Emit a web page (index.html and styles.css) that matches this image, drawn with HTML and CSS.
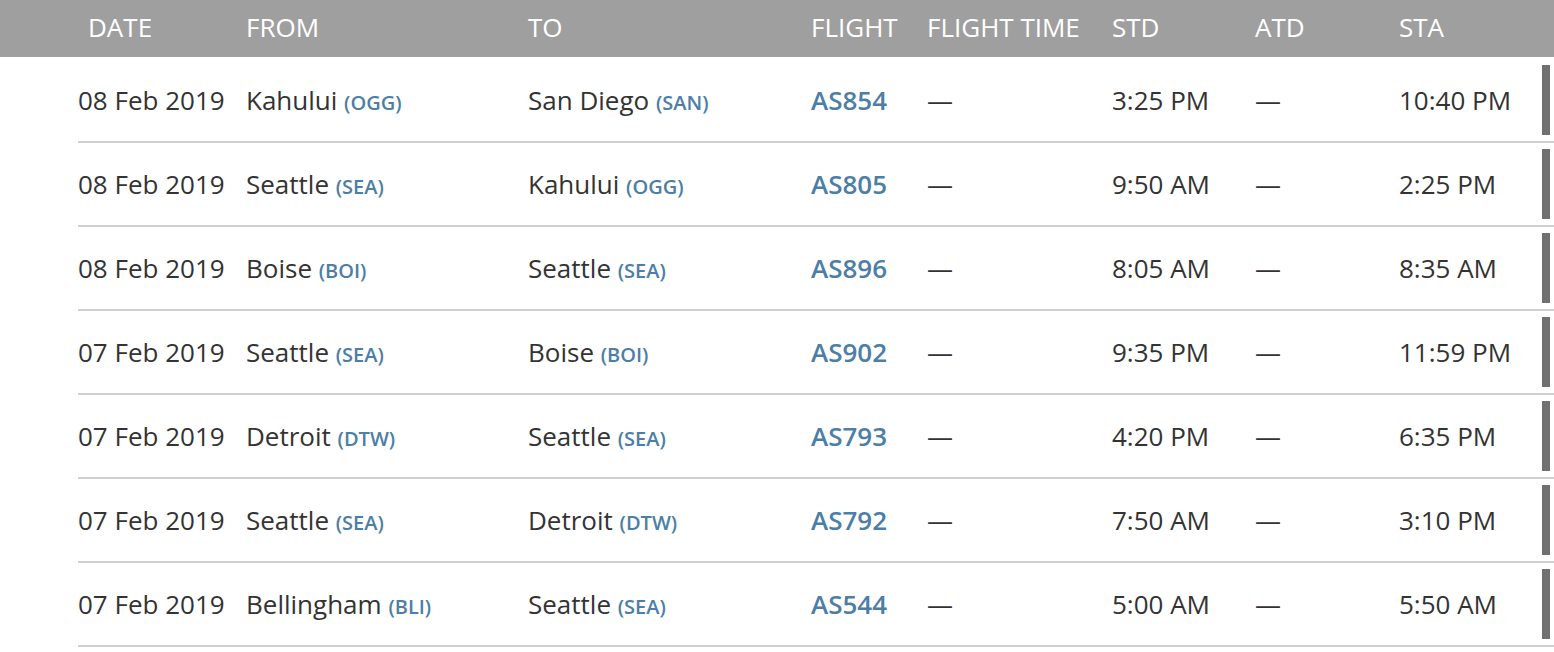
FILE: index.html
```html
<!DOCTYPE html>
<html lang="en">
<head>
<meta charset="utf-8">
<title>Flight history</title>
<link rel="stylesheet" href="styles.css">
</head>
<body>
<div class="flights">
  <div class="head">
    <div class="hcell hdate">DATE</div>
    <div class="hcell">FROM</div>
    <div class="hcell">TO</div>
    <div class="hcell hflight">FLIGHT</div>
    <div class="hcell">FLIGHT TIME</div>
    <div class="hcell">STD</div>
    <div class="hcell">ATD</div>
    <div class="hcell">STA</div>
  </div>
  <div class="rows">
    <div class="row">
      <div>08 Feb 2019</div>
      <div>Kahului <span class="code">(OGG)</span></div>
      <div>San Diego <span class="code">(SAN)</span></div>
      <div class="flight">AS854</div>
      <div>—</div>
      <div>3:25 PM</div>
      <div>—</div>
      <div>10:40 PM</div>
      <div class="bar"></div>
    </div>
    <div class="row">
      <div>08 Feb 2019</div>
      <div>Seattle <span class="code">(SEA)</span></div>
      <div>Kahului <span class="code">(OGG)</span></div>
      <div class="flight">AS805</div>
      <div>—</div>
      <div>9:50 AM</div>
      <div>—</div>
      <div>2:25 PM</div>
      <div class="bar"></div>
    </div>
    <div class="row">
      <div>08 Feb 2019</div>
      <div>Boise <span class="code">(BOI)</span></div>
      <div>Seattle <span class="code">(SEA)</span></div>
      <div class="flight">AS896</div>
      <div>—</div>
      <div>8:05 AM</div>
      <div>—</div>
      <div>8:35 AM</div>
      <div class="bar"></div>
    </div>
    <div class="row">
      <div>07 Feb 2019</div>
      <div>Seattle <span class="code">(SEA)</span></div>
      <div>Boise <span class="code">(BOI)</span></div>
      <div class="flight">AS902</div>
      <div>—</div>
      <div>9:35 PM</div>
      <div>—</div>
      <div>11:59 PM</div>
      <div class="bar"></div>
    </div>
    <div class="row">
      <div>07 Feb 2019</div>
      <div>Detroit <span class="code">(DTW)</span></div>
      <div>Seattle <span class="code">(SEA)</span></div>
      <div class="flight">AS793</div>
      <div>—</div>
      <div>4:20 PM</div>
      <div>—</div>
      <div>6:35 PM</div>
      <div class="bar"></div>
    </div>
    <div class="row">
      <div>07 Feb 2019</div>
      <div>Seattle <span class="code">(SEA)</span></div>
      <div>Detroit <span class="code">(DTW)</span></div>
      <div class="flight">AS792</div>
      <div>—</div>
      <div>7:50 AM</div>
      <div>—</div>
      <div>3:10 PM</div>
      <div class="bar"></div>
    </div>
    <div class="row">
      <div>07 Feb 2019</div>
      <div>Bellingham <span class="code">(BLI)</span></div>
      <div>Seattle <span class="code">(SEA)</span></div>
      <div class="flight">AS544</div>
      <div>—</div>
      <div>5:00 AM</div>
      <div>—</div>
      <div>5:50 AM</div>
      <div class="bar"></div>
    </div>
  </div>
</div>
</body>
</html>
```
FILE: styles.css
```css
html, body {
  margin: 0;
  padding: 0;
  background: #fff;
}
body {
  font-family: "Open Sans", "Liberation Sans", sans-serif;
  font-size: 26px;
  color: #333;
  overflow: hidden;
}
.flights {
  width: 1554px;
}
.head, .row {
  display: grid;
  grid-template-columns: 168px 282px 284px 115px 185px 143px 144px 1fr 8px;
  padding-left: 78px;
  padding-right: 4px;
  align-items: center;
}
.head {
  height: 53px;
  padding-bottom: 4px;
  background: #a09fa0;
  color: #fff;
  white-space: nowrap;
}
.hdate {
  padding-left: 10px;
}
.hflight {
  margin-left: -1px;
}
.rows {
  padding-top: 2px;
}
.row {
  height: 82px;
  background-image: linear-gradient(#d0d0d0, #d0d0d0);
  background-size: calc(100% - 78px) 2px;
  background-position: 78px 100%;
  background-repeat: no-repeat;
  padding-bottom: 2px;
  white-space: nowrap;
}
.flight {
  font-weight: 600;
  color: #4c7ea6;
  margin-left: -1px;
}
.code {
  font-size: 20px;
  font-weight: 600;
  color: #4c7ea6;
}
.bar {
  height: 70px;
  background: #707070;
}
```
